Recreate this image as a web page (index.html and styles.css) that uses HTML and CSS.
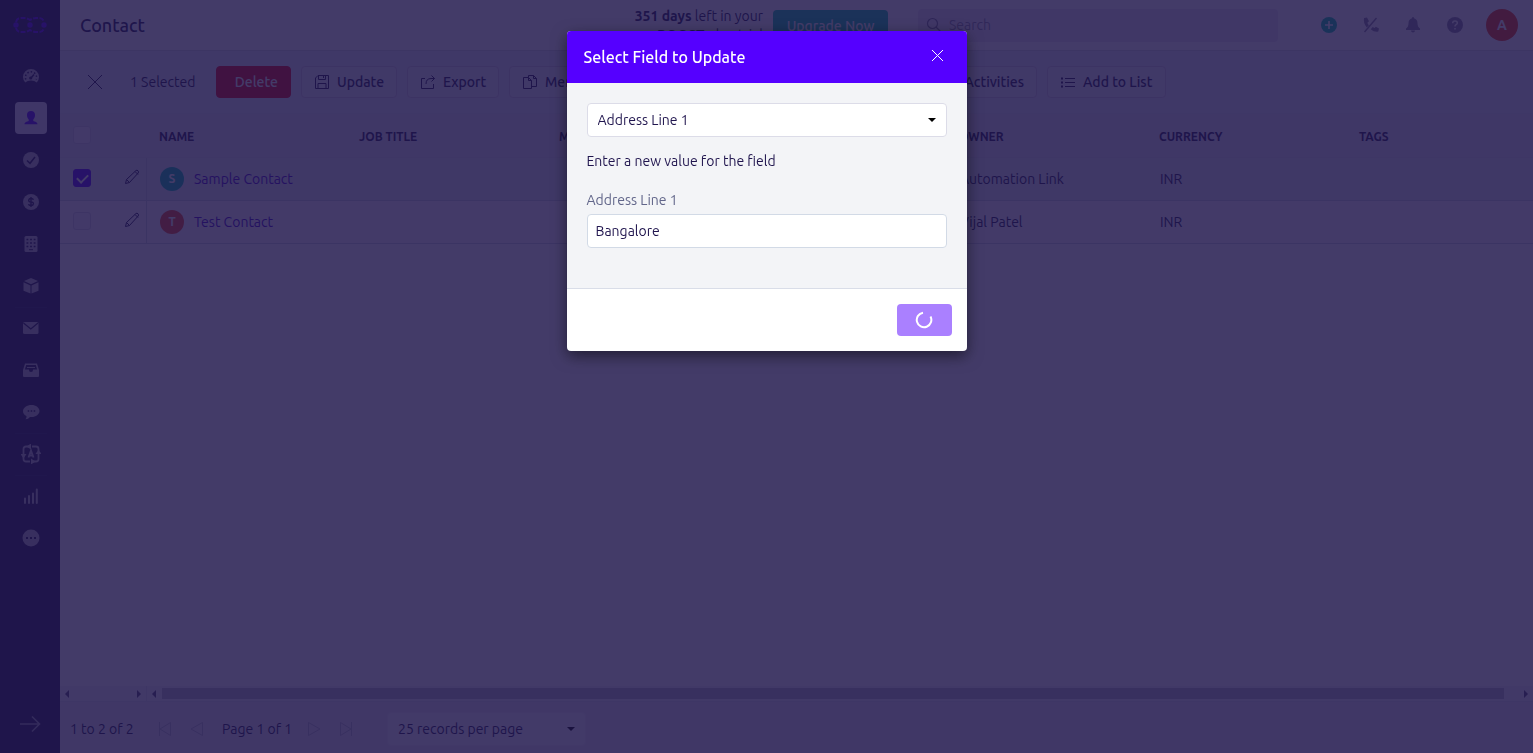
FILE: index.html
```html
<!DOCTYPE html>
<html lang="en">
<head>
<meta charset="utf-8">
<title>Contact</title>
<link rel="stylesheet" href="styles.css">
</head>
<body>
<div class="app">
  <nav class="sidebar" aria-label="Main">
    <a class="logo" href="#" aria-label="Home">
      <svg width="34" height="18" viewBox="0 0 34 18" fill="none" stroke="currentColor" stroke-width="2"><path stroke-dasharray="5 1.500" d="M3 6Q4 2 8 2h3q3 0 6 2 3-2 6-2h3q4 0 5 4M3 12q1 4 5 4h3q3 0 6-2 3 2 6 2h3q4 0 5-4"/><g fill="currentColor" stroke="none"><circle cx="3" cy="9" r="2.700"/><circle cx="17" cy="9" r="2.700"/><circle cx="31" cy="9" r="2.700"/></g></svg>
    </a>
    <ul class="nav-list">
      <li class="nav-item"><a class="nav-link" href="#" aria-label="Dashboard"><svg width="18" height="18" viewBox="0 0 18 18"><path fill="currentColor" d="M3.200 15.500A8 8 0 1 1 14.800 15.500Q12.500 13.500 9 13.500T3.200 15.500Z"/><path stroke="#20154e" stroke-width="1.500" stroke-dasharray="1.500 2" fill="none" d="M3.800 12.500A5.600 5.600 0 1 1 14.200 12.500"/><path stroke="#20154e" stroke-width="1.500" d="M8.500 11.500 12 7.500"/><circle cx="8.700" cy="11" r="1.600" fill="#20154e"/></svg></a></li>
      <li class="nav-item"><a class="nav-link nav-link-active" href="#" aria-label="Contacts"><svg width="16" height="16" viewBox="0 0 16 16" fill="currentColor"><path d="M8 1c2.600 0 4 1.600 4 4 0 2-.6 3.300-1.700 4.500v1.400c1.700.6 4.200 1.100 4.200 3.300H1.500c0-2.200 2.500-2.700 4.200-3.300V9.500C4.600 8.300 4 7 4 5c0-2.400 1.400-4 4-4Z"/></svg></a></li>
      <li class="nav-item"><a class="nav-link" href="#" aria-label="Tasks"><svg width="18" height="18" viewBox="0 0 18 18"><circle cx="9" cy="9" r="8" fill="currentColor"/><path d="m5 9.500 3 2.800 5-6.300" fill="none" stroke="#20154e" stroke-width="1.500"/></svg></a></li>
      <li class="nav-item"><a class="nav-link" href="#" aria-label="Deals"><svg width="18" height="18" viewBox="0 0 18 18"><circle cx="9" cy="9" r="8" fill="currentColor"/><path d="M11.500 6.800Q11 5.500 9 5.500T6.700 7.200 9 9t2.400 1.800-2.400 1.700-2.500-1.300M9 4v10" fill="none" stroke="#20154e" stroke-width="1.400"/></svg></a></li>
      <li class="nav-item"><a class="nav-link" href="#" aria-label="Companies"><svg width="18" height="18" viewBox="0 0 18 18"><rect x="2.500" y="1" width="13" height="16" rx="1.500" fill="currentColor"/><path d="M4.500 4.500h9M4.500 8h9M4.500 11.500h9" stroke="#20154e" stroke-width="1.500" stroke-dasharray="1.800 1.800"/><path d="M7 14.700h4" stroke="#20154e"/></svg></a></li>
      <li class="nav-item"><a class="nav-link" href="#" aria-label="Products"><svg width="18" height="18" viewBox="0 0 18 18" fill="currentColor"><path d="m9 1 7 3-7 3.200L2 4zM1.500 5.200l7 3.200V16.500l-7-2.800zM16.500 5.200l-7 3.200V16.500l7-2.800z"/></svg></a></li>
      <li class="nav-item nav-item-divided"><a class="nav-link" href="#" aria-label="Email"><svg width="18" height="18" viewBox="0 0 18 18"><rect x="1" y="3" width="15.500" height="12" rx="1.500" fill="currentColor"/><path d="m1.500 4 7.300 6L16 4" fill="none" stroke="#20154e" stroke-width="1.300"/></svg></a></li>
      <li class="nav-item"><a class="nav-link" href="#" aria-label="Inbox"><svg width="18" height="18" viewBox="0 0 18 18"><path fill="currentColor" d="M3 2.500h12L17 9v6q0 1-1 1H2q-1 0-1-1V9z"/><path fill="#20154e" d="M4.200 4h9.600l1.300 4.500h-4q0 2.500-2.100 2.500T6.900 8.500h-4z"/><path stroke="currentColor" d="M5 6.500h8"/></svg></a></li>
      <li class="nav-item"><a class="nav-link" href="#" aria-label="Conversations"><svg width="18" height="18" viewBox="0 0 18 18"><path fill="currentColor" d="M9.500 2c4.500 0 8 2.700 8 6s-3.500 6-8 6q-1 0-1.500-.1Q6 16.500 3.500 16.300q1.200-1.200 1-3.300Q1 11.500 1 8c0-3.300 4-6 8.500-6Z"/><path stroke="#20154e" stroke-width="1.500" stroke-dasharray="1.500 1.500" d="M5.700 8h8"/></svg></a></li>
      <li class="nav-item nav-item-divided"><a class="nav-link" href="#" aria-label="Automations"><svg width="20" height="20" viewBox="0 0 20 20" fill="none" stroke="currentColor" stroke-width="1.800"><path d="M8 2.500H5Q2.500 2.500 2.500 5v5M11 2.500h4Q17.500 2.500 17.500 5v2M17.500 8v7q0 2.500-2.500 2.500h-3M9 17.500H5Q2.500 17.500 2.500 15v-3M7.500 13.500l2.500-7 2.500 7M8.300 11.500h3.400"/><path fill="currentColor" stroke="none" d="m5.500 2.500 4.500-3v6zM10 14.500v6l4.500-3zM-.5 10h6l-3 4.500zM14.500 10h6l-3-4.500z"/></svg></a></li>
      <li class="nav-item nav-item-divided"><a class="nav-link" href="#" aria-label="Reports"><svg width="18" height="18" viewBox="0 0 18 18" stroke="currentColor" stroke-width="2" stroke-linecap="round"><path d="M3 11.500V16M7 9v7M11 6.500V16M14.800 2.500V16"/></svg></a></li>
      <li class="nav-item"><a class="nav-link" href="#" aria-label="More"><svg width="18" height="18" viewBox="0 0 18 18"><circle cx="9" cy="9" r="8.500" fill="currentColor"/><path stroke="#20154e" stroke-width="2" stroke-dasharray="2 2" d="M4 9h10"/></svg></a></li>
    </ul>
    <button class="expand" aria-label="Expand menu"><svg width="22" height="18" viewBox="0 0 22 18" fill="none" stroke="currentColor" stroke-width="1.600"><path d="M1 9h19M13 1.500 20.500 9 13 16.500"/></svg></button>
  </nav>

  <main class="main">
    <header class="topbar">
      <h1 class="page-title">Contact</h1>
      <p class="trial"><strong>351 days</strong> left in your<br><strong>BOOST</strong> plan trial</p>
      <button class="upgrade">Upgrade Now</button>
      <div class="search">
        <svg width="16" height="16" viewBox="0 0 16 16" fill="none" stroke="currentColor" stroke-width="1.200"><circle cx="6.500" cy="6.500" r="5"/><path d="m10 10 5 5"/></svg>
        <input class="search-input" type="search" placeholder="Search" aria-label="Search">
      </div>
      <div class="actions">
        <button class="icon-button icon-add" aria-label="Add"><svg width="16" height="16" viewBox="0 0 16 16"><circle cx="8" cy="8" r="8" fill="currentColor"/><path d="M8 4v8M4 8h8" stroke="#fff" stroke-width="1.600"/></svg></button>
        <button class="icon-button" aria-label="Calls"><svg width="16" height="16" viewBox="0 0 16 16"><path fill="currentColor" d="m1 1 3-.5 2 3.800-1.600 1.500q.5 1.500 1.500 2.500L3.800 10.500Q0 6 1 1ZM7.700 12.200 9.700 10l1.800 1 1.300-1.200L16 11.500l-.7 3Q11.500 15.500 7.700 12.200Z"/><path d="M13.500 1 1.500 15" stroke="currentColor" stroke-width="1.500"/></svg></button>
        <button class="icon-button" aria-label="Notifications"><svg width="16" height="16" viewBox="0 0 16 16" fill="currentColor"><path d="M8 0q1 0 1 1.200Q12.500 2.200 12.500 6q0 4 2.500 5.500V13H1v-1.500Q3.500 10 3.500 6 3.500 2.200 7 1.200 7 0 8 0ZM6 13.500h4q0 2-2 2t-2-2Z"/></svg></button>
        <button class="icon-button" aria-label="Help"><svg width="16" height="16" viewBox="0 0 16 16"><circle cx="8" cy="8" r="8" fill="currentColor"/><path d="M5.700 6.200Q5.700 4 8 4t2.300 2q0 1-1.200 1.700T8 9.500M8 11v1.600" fill="none" stroke="#fff" stroke-width="1.500"/></svg></button>
      </div>
      <button class="avatar avatar-user" aria-label="Account">A</button>
    </header>

    <section class="toolbar" aria-label="Bulk actions">
      <button class="clear" aria-label="Clear selection"><svg width="16" height="16" viewBox="0 0 16 16" stroke="currentColor" fill="none"><path d="m1 1 14 14M15 1 1 15"/></svg></button>
      <span class="selected-count">1 Selected</span>
      <div class="bulk">
        <button class="bulk-button bulk-delete">Delete</button>
        <button class="bulk-button"><svg width="16" height="16" viewBox="0 0 16 16" fill="none" stroke="currentColor"><path d="M4 1.500h10.500v13h-13V4zM4.500 1.500v4h7v-4M9.500 2v2M4 14.500v-5h8v5"/></svg>Update</button>
        <button class="bulk-button"><svg width="16" height="16" viewBox="0 0 16 16" fill="none" stroke="currentColor"><path d="M5 4.500H1.500v10h12V10M11.500 1.500l3 3-3 3M14.500 4.500H11q-5 0-5 5.500"/></svg>Export</button>
        <button class="bulk-button"><svg width="16" height="16" viewBox="0 0 16 16" fill="none" stroke="currentColor"><path d="M1.500 3.500h5l3 3v8h-8zM6.500 3.500v3h3M6.500 3V1.500h5l3 3v8H10M11.500 1.500v3h3"/></svg>Merge</button>
        <button class="bulk-button">Send Email</button>
        <button class="bulk-button">Automation</button>
        <button class="bulk-button bulk-end">Add Activities</button>
        <button class="bulk-button"><svg width="16" height="16" viewBox="0 0 16 16" stroke="currentColor"><path d="M5 4.500h10M5 8.500h10M5 12.500h10"/><path d="M1 4.500h2M1 8.500h2M1 12.500h2" stroke-width="2"/></svg>Add to List</button>
      </div>
    </section>

    <div class="table-wrap">
      <table class="contacts">
        <colgroup><col class="col-check"><col class="col-edit"><col class="col-data"><col class="col-data"><col class="col-data"><col class="col-data"><col class="col-data"><col class="col-data"><col></colgroup>
        <thead>
          <tr><th class="check-cell"><input class="check" type="checkbox" aria-label="Select all"></th><th></th><th>NAME</th><th>JOB TITLE</th><th>MOBILE</th><th>EMAIL</th><th>OWNER</th><th>CURRENCY</th><th>TAGS</th></tr>
        </thead>
        <tbody>
          <tr class="row-selected">
            <td class="check-cell"><input class="check" type="checkbox" checked aria-label="Select Sample Contact"></td>
            <td class="edit-cell"><button class="edit" aria-label="Edit Sample Contact"><svg width="16" height="16" viewBox="0 0 16 16" fill="none" stroke="currentColor"><path d="m1.500 14.500 1-4L12 1.500q1-.8 2 .3t.2 2.200L5.500 13.500zM2.500 10.500l3 3M11 2.500l3 3"/></svg></button></td>
            <td><a class="person" href="#"><span class="avatar avatar-teal">S</span>Sample Contact</a></td><td></td><td></td><td></td><td>Automation Link</td><td>INR</td><td></td>
          </tr>
          <tr>
            <td class="check-cell"><input class="check" type="checkbox" aria-label="Select Test Contact"></td>
            <td class="edit-cell"><button class="edit" aria-label="Edit Test Contact"><svg width="16" height="16" viewBox="0 0 16 16" fill="none" stroke="currentColor"><path d="m1.500 14.500 1-4L12 1.500q1-.8 2 .3t.2 2.200L5.500 13.500zM2.500 10.500l3 3M11 2.500l3 3"/></svg></button></td>
            <td><a class="person" href="#"><span class="avatar avatar-red">T</span>Test Contact</a></td><td></td><td></td><td></td><td>Vijal Patel</td><td>INR</td><td></td>
          </tr>
        </tbody>
      </table>
    </div>

    <div class="scrollbars" aria-hidden="true">
      <div class="scroll scroll-fixed"><i class="arrow-left"></i><i class="arrow-right"></i></div>
      <div class="scroll scroll-main"><i class="arrow-left"></i><span class="thumb"></span><i class="arrow-right"></i></div>
    </div>

    <footer class="pager">
      <span class="pager-range">1 to 2 of 2</span>
      <button class="page-button" aria-label="First page"><svg width="14" height="16" viewBox="0 0 14 16" fill="none" stroke="currentColor"><path d="M1.500 1v14M12.500 1.500v13L2 8z"/></svg></button>
      <button class="page-button" aria-label="Previous page"><svg width="14" height="16" viewBox="0 0 14 16" fill="none" stroke="currentColor"><path d="M12.500 1.500v13L1 8z"/></svg></button>
      <span class="pager-page">Page 1 of 1</span>
      <button class="page-button" aria-label="Next page"><svg width="14" height="16" viewBox="0 0 14 16" fill="none" stroke="currentColor"><path d="M1.500 1.500v13L13 8z"/></svg></button>
      <button class="page-button" aria-label="Last page"><svg width="14" height="16" viewBox="0 0 14 16" fill="none" stroke="currentColor"><path d="M12.500 1v14M1.500 1.500v13L12 8z"/></svg></button>
      <div class="select-wrap pager-select"><select class="select" aria-label="Records per page"><option>25 records per page</option></select></div>
    </footer>
  </main>
</div>

<div class="overlay">
  <form class="modal" role="dialog" aria-modal="true" aria-labelledby="modal-title">
    <div class="modal-head">
      <h2 class="modal-title" id="modal-title">Select Field to Update</h2>
      <button class="modal-close" type="button" aria-label="Close"><svg width="13" height="13" viewBox="0 0 13 13" fill="none" stroke="currentColor"><path d="m1 1 11 11M12 1 1 12"/></svg></button>
    </div>
    <div class="modal-body">
      <div class="select-wrap"><select class="select" aria-label="Field"><option>Address Line 1</option></select></div>
      <p class="hint">Enter a new value for the field</p>
      <label class="label" for="value">Address Line 1</label>
      <input class="text-input" id="value" type="text" value="Bangalore">
    </div>
    <div class="modal-foot">
      <button class="submit" type="button" aria-label="Updating"><svg width="18" height="18" viewBox="0 0 18 18" fill="none" stroke="#fff" stroke-width="2"><path d="M15.500 5.500A7.300 7.300 0 1 1 8 1.700"/></svg></button>
    </div>
  </form>
</div>
</body>
</html>
```
FILE: styles.css
```css
* { box-sizing: border-box; }
body {
  margin: 0;
  color: #20154e;
  background: #fff;
  font: 14px/20px Ubuntu, "Noto Sans", sans-serif;
}
button, input, select { font: inherit; color: inherit; }
button { border: 0; padding: 0; background: none; }
svg { display: block; flex: none; }
h1, h2, p, ul { margin: 0; padding: 0; }
a { color: #40c; text-decoration: none; }

.app { display: flex; height: 100vh; overflow: hidden; }

.sidebar {
  flex: none;
  width: 60px;
  display: flex;
  flex-direction: column;
  align-items: center;
  background: #20154a;
}
.logo { height: 55px; padding-top: 16px; color: #50f; }
.nav-list { list-style: none; padding-left: 2px; }
.nav-item { height: 42px; padding-top: 4px; border-top: 1px solid transparent; }
.nav-item-divided { border-color: #2a2058; }
.nav-link {
  width: 32px;
  height: 32px;
  display: flex;
  align-items: center;
  justify-content: center;
  border-radius: 4px;
  color: #b8b4c6;
}
.nav-link-active { background: #e4e0f4; color: #50f; }
.expand { margin-top: auto; padding-bottom: 20px; color: #9d98b0; }

.main { flex: 1; min-width: 0; display: flex; flex-direction: column; }

.topbar {
  flex: none;
  height: 51px;
  display: flex;
  align-items: center;
  padding: 0 15px 0 20px;
  border-bottom: 1px solid #d3d6e0;
}
.page-title { flex: 1; font-size: 18px; line-height: 24px; font-weight: 500; }
.trial { padding-top: 2px; line-height: 19px; text-align: right; }
.upgrade {
  width: 115px;
  height: 32px;
  margin: 2px 0 0 10px;
  border-radius: 4px;
  background: #08c4a0;
  color: #fff;
  font-weight: 500;
}
.search {
  width: 360px;
  height: 33px;
  margin-left: 30px;
  padding-left: 8px;
  display: flex;
  align-items: center;
  gap: 7px;
  border-radius: 4px;
  background: #ebe6f2;
  color: #7d7993;
}
.search-input { flex: 1; border: 0; padding: 0; background: none; }
.search-input::placeholder { color: #8d89a2; opacity: 1; }
.actions { display: flex; gap: 26px; margin: 0 23px 0 43px; color: #8b86a3; }
.icon-add { color: #00c8a0; }

.avatar {
  width: 24px;
  height: 24px;
  display: flex;
  align-items: center;
  justify-content: center;
  border-radius: 50%;
  color: #fff;
  font-size: 12px;
  font-weight: 700;
}
.avatar-user { width: 32px; height: 32px; background: #f43a0c; font-size: 14px; }
.avatar-teal { background: #00bca8; }
.avatar-red { background: #f44820; }

.toolbar {
  flex: none;
  height: 63px;
  display: flex;
  align-items: center;
  padding-left: 27px;
  border-bottom: 1px solid #dfe2ee;
  background: #e4eaf4;
}
.selected-count { width: 86px; margin-left: 27px; }
.bulk { display: grid; grid-template-columns: 75px 96px 92px 92px 130px 140px 136px 119px; gap: 10px; }
.bulk-button {
  height: 32px;
  display: flex;
  align-items: center;
  gap: 7px;
  padding: 0 12px;
  border: 1px solid #d4cce0;
  border-radius: 4px;
  background: #edeef8;
  font-weight: 500;
  white-space: nowrap;
}
.bulk-delete { justify-content: flex-end; border-color: #e80010; background: #e80010; color: #fff; }
.bulk-end { justify-content: flex-end; }

.table-wrap { flex: 1; min-height: 0; overflow: hidden; }
.contacts { width: 100%; table-layout: fixed; border-collapse: separate; border-spacing: 0; }
.col-check { width: 53px; }
.col-edit { width: 34px; }
.col-data { width: 200px; }
.contacts th, .contacts td { padding: 0; text-align: left; border-bottom: 1px solid #cdd0e0; }
.contacts th {
  height: 44px;
  padding: 2px 0 0 12px;
  font-size: 12px;
  font-weight: 700;
  background: #e7e2f0;
  border-color: #dcdde9;
}
.contacts td { height: 43px; padding-left: 13px; background: #faf8fe; }
.contacts .check-cell { padding: 0 0 2px 13px; }
.contacts .edit-cell { padding-left: 11px; border-right: 1px solid #cdd0e0; }
.contacts .row-selected td { background: #e2e8f1; }
.check {
  appearance: none;
  display: block;
  width: 18px;
  height: 18px;
  margin: 0;
  border: 1px solid #d8d4e6;
  border-radius: 3px;
  background: #f4f2fb;
}
.check:checked {
  border-color: #50f;
  background: #50f;
}
.check:checked::after {
  content: "";
  display: block;
  width: 9px;
  height: 5px;
  margin: 4px auto 0;
  border: solid #fff;
  border-width: 0 0 2px 2px;
  rotate: -45deg;
}
.person { display: flex; align-items: center; gap: 10px; }

.scrollbars { flex: none; height: 16px; display: flex; background: #f2eff8; border-bottom: 1px solid #dcdde9; }
.scroll { display: flex; align-items: center; }
.scroll-fixed { width: 87px; justify-content: space-between; padding: 0 5px; border-right: 1px solid #dcdde9; }
.scroll-main { flex: 1; padding: 0 5px; gap: 6px; }
.thumb { flex: 1; height: 11px; margin-right: 14px; background: #b8b8c8; }
.arrow-left, .arrow-right { border: solid transparent; border-width: 4px 0; }
.arrow-left { border-right: 4px solid #504a70; }
.arrow-right { border-left: 4px solid #504a70; }

.pager {
  flex: none;
  height: 51px;
  display: flex;
  align-items: center;
  padding: 2px 0 0 10px;
  background: #e9e6f1;
}
.page-button { width: 14px; margin-right: 18px; color: #bab7ca; }
.pager-range { width: 88px; }
.pager-page { width: 85px; }
.pager-select { width: 199px; margin-left: 16px; }

.select-wrap { display: grid; align-items: center; }
.select-wrap > *, .select-wrap::after { grid-area: 1 / 1; }
.select-wrap::after {
  content: "";
  justify-self: end;
  margin-right: 11px;
  border: solid transparent;
  border-width: 4px 4px 0;
  border-top-color: #000;
  pointer-events: none;
}
.select, .text-input {
  appearance: none;
  width: 100%;
  height: 34px;
  padding: 0 10px;
  border: 1px solid #dcdce8;
  border-radius: 4px;
  background: #fff;
}
.pager-select .select { border-color: #eeebf6; background: #f7f4fc; }

.overlay {
  position: fixed;
  inset: 0;
  display: flex;
  align-items: flex-start;
  justify-content: center;
  padding-top: 31px;
  background: rgba(31, 22, 75, .84);
}
.modal {
  width: 400px;
  overflow: hidden;
  border-radius: 4px;
  background: #fff;
  box-shadow: 0 5px 15px rgba(0, 0, 0, .5);
}
.modal-head {
  height: 52px;
  display: flex;
  align-items: center;
  justify-content: space-between;
  padding: 0 23px 0 17px;
  background: #50f;
  color: #fff;
}
.modal-title { font-size: 16px; line-height: 24px; font-weight: 500; }
.modal-close { padding-bottom: 3px; }
.modal-body { padding: 20px 20px 40px; background: #f3f4f7; }
.hint { margin: 14px 0 19px; }
.label { display: block; margin-bottom: 4px; color: #62668a; }
.text-input { display: block; padding: 0 8px; border-color: #d2dae6; }
.modal-foot { display: flex; justify-content: flex-end; padding: 15px; border-top: 1px solid #d9dde8; }
.submit {
  width: 55px;
  height: 32px;
  display: flex;
  align-items: center;
  justify-content: center;
  border-radius: 4px;
  background: #aa80ff;
}
```
